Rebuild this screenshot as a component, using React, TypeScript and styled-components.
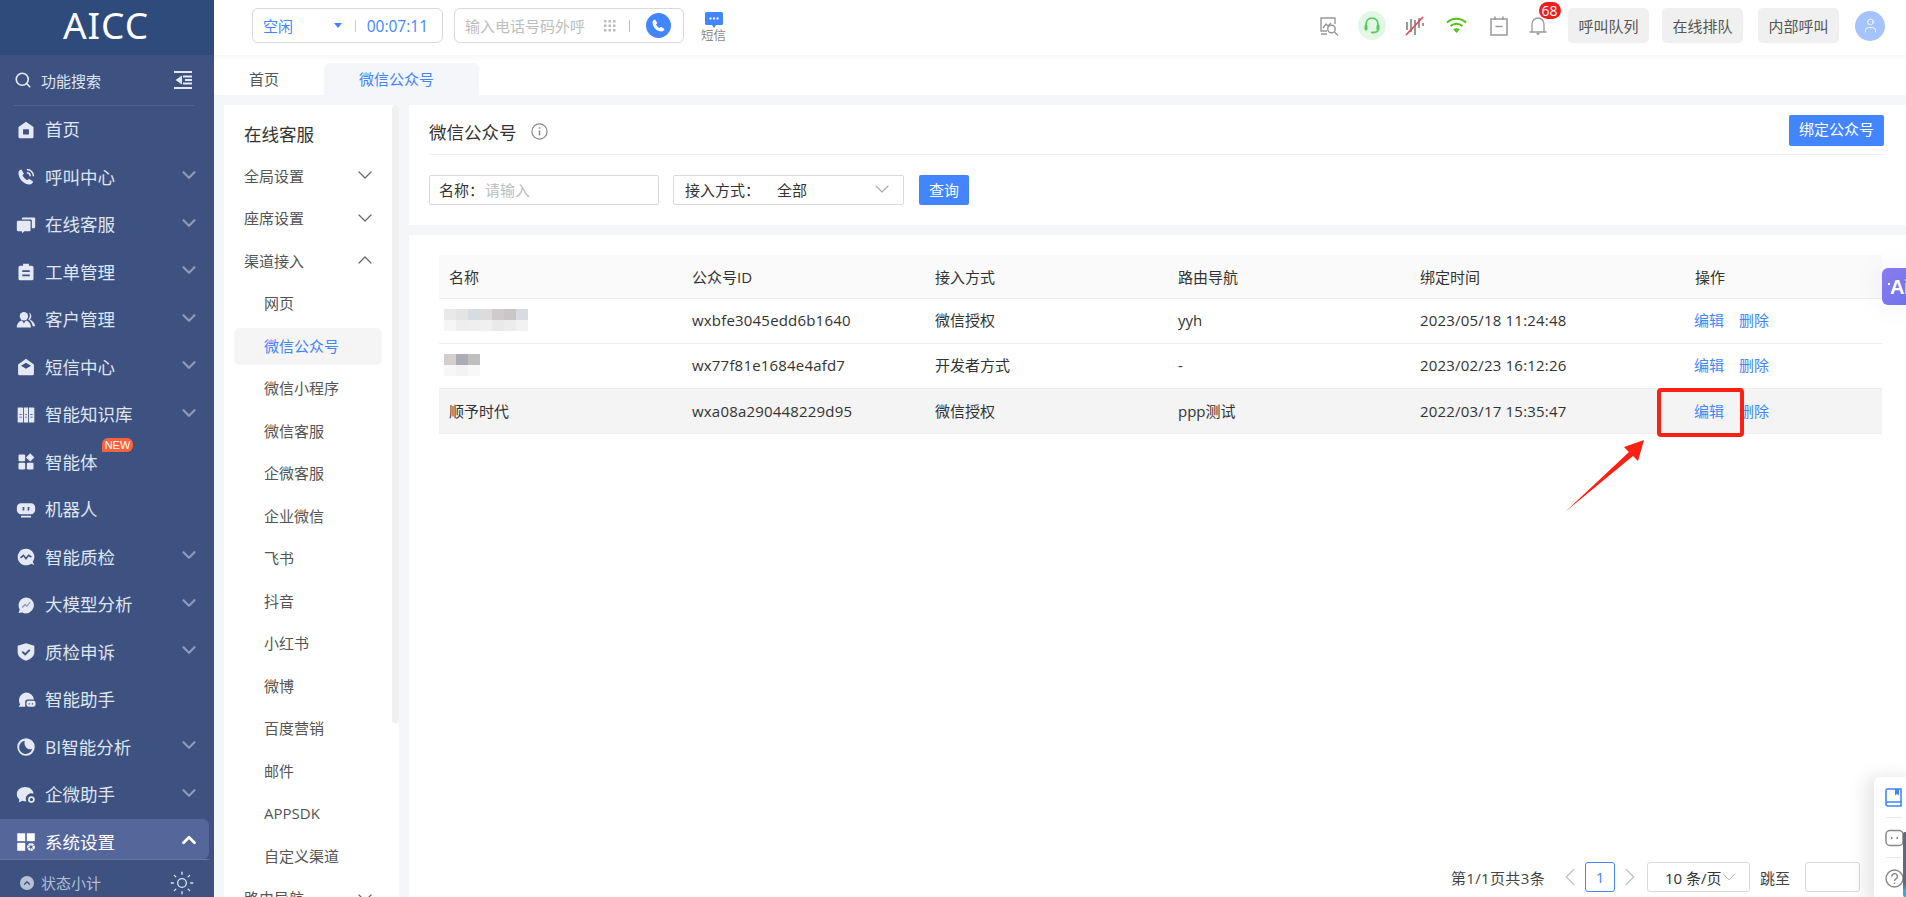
import * as React from 'react';
import styled, { createGlobalStyle } from 'styled-components';
import { Search, ChevronDown, ChevronUp, ChevronLeft, ChevronRight, Sun, User } from 'lucide-react';

const FONT = `"Open Sans", "Noto Sans CJK SC", sans-serif`;
const BLUE = '#4285ff';

const GlobalStyle = createGlobalStyle`
  html, body { margin: 0; padding: 0; height: 100%; overflow: hidden; background: #f4f6fa; }
  * { box-sizing: border-box; }
  body { font-family: ${FONT}; color: #333; }
`;

const Page = styled.div`
  position: relative;
  display: flex;
  width: 1906px;
  height: 897px;
  overflow: hidden;
`;

/* left nav */
const Sidebar = styled.aside`
  display: flex;
  flex-direction: column;
  flex: 0 0 214px;
  height: 897px;
  background: #3e5282;
  color: #dfe5f1;
`;

const Logo = styled.div`
  height: 55px;
  flex: none;
  padding-right: 2px;
  background: #2f4b7c;
  color: #fff;
  font: 400 37px/50px "Noto Sans", sans-serif;
  letter-spacing: 1px;
  text-align: center;
`;

const SearchRow = styled.div`
  display: flex;
  align-items: center;
  flex: none;
  height: 51px;
  margin: 0 20px 0 14px;
  padding-right: 2px;
  border-bottom: 1px solid #4f6392;
  font-size: 15px;
  gap: 9px;
  span { flex: 1; }
`;

const Nav = styled.nav`
  flex: 1;
  min-height: 0;
  overflow: hidden;
`;

const NavItem = styled.div<{ $active?: boolean }>`
  display: flex;
  align-items: center;
  height: ${(p) => (p.$active ? '40.5px' : '47.5px')};
  width: 209px;
  padding: ${(p) => (p.$active ? '7px 9px 0 16px' : '0 9px 0 16px')};
  font-size: 17.5px;
  border-radius: 0 6px 6px 0;
  background: ${(p) => (p.$active ? '#55669a' : 'transparent')};
  color: ${(p) => (p.$active ? '#fff' : '#dfe5f1')};
  white-space: nowrap;
`;

const NavIcon = styled.svg`
  flex: none;
  width: 20px;
  height: 20px;
  margin-right: 9px;
  fill: #e4e9f3;
`;

const NavLabel = styled.span`
  position: relative;
  flex: 1;
  padding-bottom: 2px;
`;

const NewTag = styled.b`
  position: absolute;
  left: 57px;
  top: -11px;
  width: 31px;
  height: 14px;
  font: 400 11px/14px "Liberation Sans", sans-serif;
  text-align: center;
  color: #fff;
  background: #f9623c;
  border-radius: 6px 6px 6px 0;
`;

const Caret = styled.span<{ $bright?: boolean }>`
  display: flex;
  color: ${(p) => (p.$bright ? '#fff' : '#8d99b9')};
  svg { display: block; margin-top: -4px; }
`;

const SideFoot = styled.div`
  display: flex;
  align-items: center;
  flex: none;
  height: 38px;
  width: 209px;
  padding: 8px 14px 0 20px;
  border-top: 1px solid #65769f;
  font-size: 15px;
  color: #b3bdd3;
  gap: 7px;
  span { flex: 1; }
`;

const FootDot = styled.i`
  display: flex;
  align-items: center;
  justify-content: center;
  width: 14px;
  height: 14px;
  border-radius: 50%;
  color: #3e5282;
  background: #b8c1d6;
`;

/* right column */
const Main = styled.div`
  display: flex;
  flex-direction: column;
  flex: 1;
  min-width: 0;
`;

const TopBar = styled.header`
  display: flex;
  align-items: center;
  flex: none;
  height: 55px;
  padding: 0 21px 4px 38px;
  background: #fff;
`;

const CallBox = styled.div<{ $w: number }>`
  display: flex;
  align-items: center;
  width: ${(p) => p.$w}px;
  height: 35px;
  padding: 0 10px;
  margin-right: 11px;
  border: 1px solid #d9d9d9;
  border-radius: 6px;
  font-size: 15px;
`;

const StateText = styled.span`
  flex: 1;
  color: ${BLUE};
`;

const DownTri = styled.i`
  width: 0;
  height: 0;
  margin-right: 13px;
  border: 4px solid transparent;
  border-top: 5px solid ${BLUE};
  border-bottom: 0;
`;

const VLine = styled.i`
  width: 1px;
  height: 12px;
  background: #c5cfe0;
`;

const Timer = styled.span`
  margin: 0 4px 0 11px;
  color: ${BLUE};
  font-size: 15.5px;
`;

const Placeholder = styled.span`
  flex: 1;
  color: #bdbdbd;
`;

const DialGrid = styled.svg`
  margin-right: -2px;
`;

const DialLine = styled(VLine)`
  margin-left: 15px;
  background: #bbb;
`;

const CallRound = styled.span`
  display: flex;
  align-items: center;
  justify-content: center;
  width: 25px;
  height: 25px;
  margin-left: 16px;
  margin-right: 2px;
  border-radius: 50%;
  background: ${BLUE};
`;

const SmsLink = styled.div`
  display: flex;
  flex-direction: column;
  align-items: center;
  margin-left: 6px;
  padding-top: 3px;
  font-size: 12.5px;
  line-height: 15px;
  color: #8a8a8a;
`;

const TopRight = styled.div`
  display: flex;
  align-items: center;
  margin-left: auto;
`;

const Slot = styled.span`
  position: relative;
  display: flex;
  align-items: center;
  justify-content: center;
  width: 42.5px;
`;

const BellSlot = styled(Slot)`
  width: 38.5px;
  padding-right: 4px;
`;

const HeadsetBg = styled.span`
  display: flex;
  align-items: center;
  justify-content: center;
  width: 28px;
  height: 29px;
  border-radius: 50%;
  background: #e4f6e6;
`;

const Badge = styled.b`
  position: absolute;
  left: 18px;
  top: -14px;
  width: 22px;
  height: 17px;
  font: 400 14px/17px ${FONT};
  text-align: center;
  color: #fff;
  background: #ee1d1d;
  border-radius: 9px;
`;

const GreyBtn = styled.span<{ $gap?: number }>`
  display: flex;
  align-items: center;
  justify-content: center;
  width: 81px;
  height: 35px;
  margin-left: ${(p) => p.$gap ?? 13}px;
  font-size: 15px;
  color: #555;
  background: #f0f0f0;
  border-radius: 5px;
`;

const Avatar = styled.span`
  display: flex;
  align-items: center;
  justify-content: center;
  width: 30px;
  height: 30px;
  margin-left: 16px;
  border-radius: 50%;
  color: #fff;
  background: #a4c3ff;
`;

const TabBar = styled.div`
  display: flex;
  align-items: flex-end;
  flex: none;
  height: 40px;
  background: linear-gradient(#f8f8f8, #fff 6px);
`;

const Tab = styled.div<{ $active?: boolean }>`
  display: flex;
  align-items: center;
  justify-content: center;
  width: ${(p) => (p.$active ? '155px' : '110px')};
  height: 32px;
  padding: 0 10px 2px 0;
  font-size: 15px;
  color: ${(p) => (p.$active ? BLUE : '#555')};
  background: ${(p) => (p.$active ? '#f4f6fa' : 'transparent')};
  border-radius: 6px 6px 0 0;
`;

const Body = styled.div`
  display: flex;
  flex: 1;
  min-height: 0;
  padding: 10px 0 0 10px;
  gap: 10px;
`;

/* second level menu */
const SubSide = styled.div`
  position: relative;
  flex: 0 0 175px;
  background: #fff;
  overflow: hidden;
`;

const SubThumb = styled.i`
  position: absolute;
  right: 0;
  top: 0;
  width: 7px;
  height: 618px;
  background: #f0f0f0;
  border-radius: 4px;
`;

const SubTitle = styled.div`
  height: 50px;
  padding: 10px 0 0 20px;
  font-size: 17.5px;
  line-height: 38px;
  color: #333;
`;

const SubGroup = styled.div`
  display: flex;
  align-items: center;
  justify-content: space-between;
  width: 153px;
  height: 42.5px;
  padding: 0 0 2px 20px;
  font-size: 15px;
  color: #555;
  svg { color: #666; flex: none; }
`;

const SubRow = styled.div`
  display: flex;
  align-items: center;
  height: 42.5px;
  padding-left: 10px;
`;

const SubLeaf = styled.div<{ $active?: boolean }>`
  display: flex;
  align-items: center;
  width: 148px;
  height: 37px;
  padding: 0 0 2px 30px;
  font-size: 15px;
  color: ${(p) => (p.$active ? BLUE : '#555')};
  background: ${(p) => (p.$active ? '#f5f5f5' : 'transparent')};
  border-radius: 6px;
`;

/* content */
const Panel = styled.div`
  display: flex;
  flex-direction: column;
  flex: 1;
  min-width: 0;
  gap: 10px;
`;

const HeadCard = styled.section`
  flex: none;
  height: 120px;
  padding: 0 22px 0 20px;
  background: #fff;
`;

const TitleRow = styled.div`
  display: flex;
  align-items: center;
  height: 50px;
  padding-top: 3px;
  border-bottom: 1px solid #eee;
  font-size: 17.5px;
  color: #333;
  gap: 14px;
`;

const BindBtn = styled.span`
  margin: 0 0 1px auto;
  height: 31px;
  padding: 0 10px;
  font-size: 15px;
  line-height: 29px;
  color: #fff;
  background: ${BLUE};
  border-radius: 2px;
`;

const FilterRow = styled.div`
  display: flex;
  align-items: center;
  margin-top: 20px;
  font-size: 15px;
`;

const Field = styled.div<{ $w: number; $pad: number }>`
  display: flex;
  align-items: center;
  width: ${(p) => p.$w}px;
  height: 30px;
  margin-right: 14px;
  padding: 0 8px 2px ${(p) => p.$pad}px;
  border: 1px solid #d9d9d9;
  border-radius: 2px;
  color: #333;
`;

const FieldHint = styled.span`
  margin-left: 1px;
  color: #bdbdbd;
`;

const FieldValue = styled.span`
  flex: 1;
  margin-left: 17px;
`;

const FieldArrow = styled(ChevronDown)`
  flex: none;
  margin-right: 1px;
  color: #aaa;
`;

const QueryBtn = styled.span`
  width: 50px;
  height: 30px;
  margin-left: 1px;
  line-height: 30px;
  text-align: center;
  color: #fff;
  background: ${BLUE};
  border-radius: 2px;
`;

const TableCard = styled.section`
  position: relative;
  display: flex;
  flex-direction: column;
  flex: 1;
  min-height: 0;
  padding: 20px 24px 5px 30px;
  background: #fff;
`;

const Table = styled.table`
  width: 1443px;
  table-layout: fixed;
  border-collapse: collapse;
  font-size: 15px;
`;

const Th = styled.th<{ $w: number }>`
  width: ${(p) => p.$w}px;
  height: 43px;
  padding: 0 10px;
  font-weight: 400;
  text-align: left;
  color: #333;
  background: #fafafa;
  border-bottom: 1px solid #eee;
`;

const Td = styled.td`
  height: 45px;
  padding: 0 10px;
  color: #333;
  border-bottom: 1px solid #eee;
`;

const Tr = styled.tr<{ $hover?: boolean }>`
  background: ${(p) => (p.$hover ? '#f4f4f4' : '#fff')};
  ${Td} { padding-bottom: ${(p) => (p.$hover ? 0 : 2)}px; }
`;

const CodeTd = styled(Td)`
  letter-spacing: 0.19px;
`;

const ActionTd = styled(Td)`
  padding-left: 9px;
`;

const Mosaic = styled.svg`
  display: block;
  margin-left: -5px;
`;

const Action = styled.a`
  margin-right: 15px;
  color: ${BLUE};
`;

const Pager = styled.div`
  display: flex;
  align-items: center;
  justify-content: flex-end;
  margin-top: auto;
  margin-right: 22px;
  height: 30px;
  font-size: 15px;
  color: #444;
`;

const PagerTotal = styled.span`
  margin-right: 17px;
  letter-spacing: 0.35px;
`;

const PagerArrow = styled.span`
  display: flex;
  width: 16px;
  justify-content: center;
  color: #c0c0c0;
  svg { flex: none; }
`;

const PagerNum = styled.span`
  width: 30px;
  height: 30px;
  margin: 0 7px;
  line-height: 28px;
  text-align: center;
  color: ${BLUE};
  border: 1px solid ${BLUE};
  border-radius: 3px;
`;

const PagerSelect = styled.span`
  display: flex;
  align-items: center;
  width: 103px;
  height: 30px;
  margin: 0 10px 0 9px;
  padding-left: 17px;
  color: #333;
  border: 1px solid #d9d9d9;
  border-radius: 3px;
  white-space: nowrap;
  svg { flex: none; color: #bbb; margin-left: -5px; }
`;

const PagerInput = styled.span`
  width: 55px;
  height: 30px;
  margin-left: 15px;
  border: 1px solid #d9d9d9;
  border-radius: 3px;
`;

/* things floating over the page */
const AiBtn = styled.div`
  position: absolute;
  left: 1882px;
  top: 268px;
  width: 30px;
  height: 37px;
  padding-left: 8px;
  font: 700 20px/38px "Liberation Sans", sans-serif;
  letter-spacing: -0.5px;
  color: #fff;
  background: linear-gradient(135deg, #8a7cf0, #6c73ea);
  border-radius: 6px;
  box-shadow: 0 0 24px rgba(120, 110, 240, 0.12);
  &::before {
    content: '';
    position: absolute;
    left: 6px;
    top: 15px;
    width: 2px;
    height: 2px;
    background: #fff;
  }
`;

const Helper = styled.div`
  position: absolute;
  left: 1874px;
  top: 777px;
  width: 50px;
  height: 130px;
  padding: 11px 0 0 11px;
  background: #fff;
  border-radius: 6px;
  box-shadow: -8px 0 18px rgba(0, 0, 0, 0.1);
  svg { display: block; }
`;

const HelperLine = styled.i`
  display: block;
  width: 16px;
  height: 1px;
  margin: 10px 0 11px 1px;
  background: #e8e8e8;
`;

const HelperStrip = styled.i`
  position: absolute;
  left: 1903px;
  top: 832px;
  width: 3px;
  height: 65px;
  background: linear-gradient(#5f6b78 80%, #3ea5d8 90%);
  border-radius: 2px 0 0 2px;
`;

const RedFrame = styled.div`
  position: absolute;
  left: 1657px;
  top: 388px;
  width: 87px;
  height: 49px;
  border: 4px solid #fb2014;
  border-radius: 4px;
`;

const ArrowMark = styled.svg`
  position: absolute;
  left: 1560px;
  top: 435px;
`;

const navItems: { label: string; icon: React.ReactNode; caret?: boolean }[] = [
  {
    label: '首页',
    icon: <path fillRule="evenodd" d="M12 2 21 8.500V20a2 2 0 0 1-2 2H5a2 2 0 0 1-2-2V8.500ZM8.500 11v6.500h7V11Z" />,
  },
  {
    label: '呼叫中心',
    caret: true,
    icon: (
      <>
        <path d="M6.500 3 9.500 8 7.800 10c1 2.500 3 4.600 5.700 6l2-1.800 5 3.200c-.4 2-2 3.600-4 3.600C9 21 2.800 13.500 3 6.800 3 5 4.500 3.300 6.500 3Z" />
        <path d="M13 3a8 8 0 0 1 8 8M13 7a4 4 0 0 1 4 4" fill="none" stroke="#e4e9f3" strokeWidth="1.800" />
      </>
    ),
  },
  {
    label: '在线客服',
    caret: true,
    icon: (
      <>
        <path d="M1 8.500A1.500 1.500 0 0 1 2.500 7H16a1.500 1.500 0 0 1 1.500 1.500V18a1.500 1.500 0 0 1-1.500 1.500H10L7.500 22 7 19.500H2.500A1.500 1.500 0 0 1 1 18Z" />
        <path d="M7 4.500A1.500 1.500 0 0 1 8.500 3H22a1 1 0 0 1 1 1v10.500a1.500 1.500 0 0 1-1.500 1.500H19V7a1.500 1.500 0 0 0-1.500-1.500H7Z" />
      </>
    ),
  },
  {
    label: '工单管理',
    caret: true,
    icon: (
      <path
        fillRule="evenodd"
        d="M8.500 2h7v2.500H19a2 2 0 0 1 2 2V20a2 2 0 0 1-2 2H5a2 2 0 0 1-2-2V6.500a2 2 0 0 1 2-2h3.500ZM7.500 10v2h9v-2Zm0 5v2h9v-2Z"
      />
    ),
  },
  {
    label: '客户管理',
    caret: true,
    icon: (
      <>
        <circle cx="9.500" cy="7.500" r="5" />
        <path d="M1 21c0-5 3-8 6-8.500l2.500 3.500 2.500-3.500c3 .5 6 3.500 6 8.500Z" />
        <path d="M15.500 3a5 5 0 0 1 1 8.500c3 1 6 4 6.500 8h-3c-.4-3.500-2.500-7-5.300-8.500a6.500 6.500 0 0 0 .8-8Z" />
      </>
    ),
  },
  {
    label: '短信中心',
    caret: true,
    icon: (
      <path
        fillRule="evenodd"
        d="M12 2 21.500 9V20a2 2 0 0 1-2 2h-15a2 2 0 0 1-2-2V9ZM6 10.500 12 14l6-3.500L12 7Z"
      />
    ),
  },
  {
    label: '智能知识库',
    caret: true,
    icon: (
      <path
        fillRule="evenodd"
        d="M3 3h4.500a1 1 0 0 1 1 1v17h-5.500a1 1 0 0 1-1-1V4a1 1 0 0 1 1-1Zm6.500 0h5v18h-5Zm6 0H21a1 1 0 0 1 1 1v16a1 1 0 0 1-1 1h-5.500ZM4 11v1h3v-1Zm0 3v1h3v-1Zm7-3v1h2v-1Zm0 3v1h2v-1Zm6-3v1h3v-1Zm0 3v1h3v-1Z"
      />
    ),
  },
  {
    label: '智能体',
    icon: (
      <>
        <rect x="3" y="3" width="8" height="8" rx="1.500" />
        <rect x="3" y="13" width="8" height="8" rx="1.500" />
        <rect x="13" y="13" width="8" height="8" rx="1.500" />
        <path d="M17 1.500 22 6.500 17 11.500 12 6.500Z" />
      </>
    ),
  },
  {
    label: '机器人',
    icon: (
      <path
        fillRule="evenodd"
        d="M6 4h12a5 5 0 0 1 5 5v3a5 5 0 0 1-5 5H6a5 5 0 0 1-5-5V9a5 5 0 0 1 5-5Zm2 4.500v4h2v-4Zm6 0v4h2v-4ZM6 19h12v2H6Z"
      />
    ),
  },
  {
    label: '智能质检',
    caret: true,
    icon: (
      <>
        <path d="M12 2a10 10 0 0 1 8 16l2 3.500-4-1.500A10 10 0 1 1 12 2Z" />
        <path d="M5.500 13 9 10l3 4 3-4 3.500 2" fill="none" stroke="#3e5282" strokeWidth="1.800" />
      </>
    ),
  },
  {
    label: '大模型分析',
    caret: true,
    icon: (
      <>
        <path d="M12 3a9.500 9.500 0 1 1-4.500 17.900L3 21.500l1.500-4A9.500 9.500 0 0 1 12 3Z" />
        <path d="M7.500 15 11 11.500l2 2 4-5" fill="none" stroke="#7f8fb3" strokeWidth="1.300" />
      </>
    ),
  },
  {
    label: '质检申诉',
    caret: true,
    icon: (
      <>
        <path d="M12 1.500 22 4.500V12c0 5-4 8.500-10 10.500C6 20.500 2 17 2 12V4.500Z" />
        <path d="M7.500 11.500 11 15l5.500-5.500" fill="none" stroke="#3e5282" strokeWidth="2.300" />
      </>
    ),
  },
  {
    label: '智能助手',
    icon: (
      <>
        <path d="M12 3a9.500 9.500 0 0 1 9.500 8.500H14a3 3 0 0 0-3 3V20H3l2-2.500A9.500 9.500 0 0 1 12 3Z" />
        <path fillRule="evenodd" d="M15 13h6a2.500 2.500 0 0 1 2.500 2.500v2A2.500 2.500 0 0 1 21 20h-6a2.500 2.500 0 0 1-2.500-2.500v-2A2.500 2.500 0 0 1 15 13Zm0 3v1.500h1.500V16Zm4 0v1.500h1.500V16Z" />
      </>
    ),
  },
  {
    label: 'BI智能分析',
    caret: true,
    icon: (
      <path
        fillRule="evenodd"
        d="M12 1.500a10.500 10.500 0 1 1 0 21 10.500 10.500 0 0 1 0-21ZM10.500 4.500a8 8 0 1 0 9 10C13.500 16 9 11 10.500 4.500Z"
      />
    ),
  },
  {
    label: '企微助手',
    caret: true,
    icon: (
      <>
        <path d="M11 2.500c5.500 0 9.800 3.500 10 8a6.500 6.500 0 0 0-8.500 8.800C11 19.700 9 19.500 7.500 19L3.500 21l.5-4C2 15.500 1 13.500 1 11c0-4.800 4.500-8.500 10-8.500Z" />
        <circle cx="18.500" cy="17.500" r="3" fill="none" stroke="#e4e9f3" strokeWidth="2" />
      </>
    ),
  },
  {
    label: '系统设置',
    caret: true,
    icon: (
      <>
        <rect x="1.500" y="1.500" width="9.500" height="9.500" fill="#fff" />
        <rect x="13" y="1.500" width="9.500" height="9.500" fill="#fff" />
        <rect x="1.500" y="13" width="9.500" height="9.500" fill="#fff" />
        <circle cx="18" cy="18" r="3.300" fill="none" stroke="#fff" strokeWidth="2.800" strokeDasharray="2.500 .6" />
      </>
    ),
  },
];

const channelLeaves = [
  '网页',
  '微信公众号',
  '微信小程序',
  '微信客服',
  '企微客服',
  '企业微信',
  '飞书',
  '抖音',
  '小红书',
  '微博',
  '百度营销',
  '邮件',
  'APPSDK',
  '自定义渠道',
];

const columns = [
  { label: '名称', w: 243 },
  { label: '公众号ID', w: 243 },
  { label: '接入方式', w: 243 },
  { label: '路由导航', w: 242 },
  { label: '绑定时间', w: 275 },
  { label: '操作', w: 197 },
];

const mosaicOne = [
  ['#e9e9e9', '#e4e4e4', '#d8dbe0', '#dcdcdc', '#cfcbcb', '#c8c6c6', '#d8dce0'],
  ['#f6f6f6', '#eeeeee', '#efefef', '#f0f0f0', '#e9e9e9', '#ececec', '#f2f2f2'],
];
const mosaicTwo = [
  ['#d4cfcc', '#acacb4', '#bfbfbf'],
  ['#f7f7f7', '#f3f3f3', '#f8f8f8'],
];

function Blur({ cells }: { cells: string[][] }) {
  return (
    <Mosaic width={cells[0].length * 12} height={22}>
      {cells.map((row, y) => row.map((c, x) => <rect key={`${x}-${y}`} x={x * 12} y={y * 11} width="12" height="11" fill={c} />))}
    </Mosaic>
  );
}

const rows: { name: React.ReactNode; id: string; way: string; route: string; time: string; hover?: boolean }[] = [
  { name: <Blur cells={mosaicOne} />, id: 'wxbfe3045edd6b1640', way: '微信授权', route: 'yyh', time: '2023/05/18 11:24:48' },
  { name: <Blur cells={mosaicTwo} />, id: 'wx77f81e1684e4afd7', way: '开发者方式', route: '-', time: '2023/02/23 16:12:26' },
  { name: '顺予时代', id: 'wxa08a290448229d95', way: '微信授权', route: 'ppp测试', time: '2022/03/17 15:35:47', hover: true },
];

export default function App() {
  return (
    <Page>
      <GlobalStyle />
      <Sidebar>
        <Logo>AICC</Logo>
        <SearchRow>
          <Search size={18} strokeWidth={2.2} color="#e4e9f3" />
          <span>功能搜索</span>
          <svg width="18" height="18" viewBox="0 0 18 18" fill="#e4e9f3">
            <path d="M0 0h18v2H0ZM0 16h18v2H0ZM9 4.500h9v2H9ZM9 11.500h9v2H9ZM11 8h7v2h-7ZM8 4.500v9L1.500 9Z" />
          </svg>
        </SearchRow>
        <Nav>
          {navItems.map((item, i) => {
            const active = i === navItems.length - 1;
            return (
              <NavItem key={item.label} $active={active}>
                <NavIcon viewBox="0 0 24 24">{item.icon}</NavIcon>
                <NavLabel>
                  {item.label}
                  {item.label === '智能体' && <NewTag>NEW</NewTag>}
                </NavLabel>
                {item.caret && (
                  <Caret $bright={active}>
                    {active ? <ChevronUp size={22} strokeWidth={3} /> : <ChevronDown size={22} strokeWidth={2.5} />}
                  </Caret>
                )}
              </NavItem>
            );
          })}
        </Nav>
        <SideFoot>
          <FootDot>
            <ChevronUp size={10} strokeWidth={3} />
          </FootDot>
          <span>状态小计</span>
          <Sun size={26} strokeWidth={1.2} color="#dfe5f1" />
        </SideFoot>
      </Sidebar>

      <Main>
        <TopBar>
          <CallBox $w={191}>
            <StateText>空闲</StateText>
            <DownTri />
            <VLine />
            <Timer>00:07:11</Timer>
          </CallBox>
          <CallBox $w={230}>
            <Placeholder>输入电话号码外呼</Placeholder>
            <DialGrid width="12" height="12" viewBox="0 0 12 12" fill="#bbb">
              {[0, 4.5, 9].map((y) => [0, 4.5, 9].map((x) => <rect key={`${x}${y}`} x={x} y={y} width="2.500" height="2.500" />))}
            </DialGrid>
            <DialLine />
            <CallRound>
              <svg width="15" height="15" viewBox="0 0 24 24" fill="#fff">
                <path d="M6.500 2.500 10 8 8 10.500c1.200 2.500 3 4.300 5.500 5.500L16 14l5.500 3.500c-.5 2.500-2.500 4-4.500 4C9.500 21.500 2.500 14.500 2.500 7c0-2 1.500-4 4-4.500Z" />
              </svg>
            </CallRound>
          </CallBox>
          <SmsLink>
            <svg width="18" height="16" viewBox="0 0 18 16" fill={BLUE}>
              <path fillRule="evenodd" d="M1.500 0h15A1.500 1.500 0 0 1 18 1.500v10a1.500 1.500 0 0 1-1.500 1.500H11l-2 3-2-3H1.500A1.500 1.500 0 0 1 0 11.500v-10A1.500 1.500 0 0 1 1.500 0ZM4.500 5.500v2h2v-2Zm3.500 0v2h2v-2Zm3.500 0v2h2v-2Z" />
            </svg>
            短信
          </SmsLink>
          <TopRight>
            <Slot>
              <svg width="20" height="20" viewBox="0 0 20 20" fill="none" stroke="#999" strokeWidth="1.400">
                <path d="M8 15H2V2h14v6M4 12l3-4 2 2 3-3" />
                <circle cx="12.500" cy="13" r="3.800" />
                <path d="M15.500 16 19 19.500M2 18h6" />
              </svg>
            </Slot>
            <Slot>
              <HeadsetBg>
                <svg width="18" height="19" viewBox="0 0 18 19" fill="none" stroke="#4fce5d" strokeWidth="1.700">
                  <path d="M3 10V8a6 6 0 0 1 12 0v2M15 13c0 2-1.500 3.500-4.500 3.500" />
                  <rect x="1.500" y="8.500" width="3" height="6" rx="1.500" fill="#4fce5d" stroke="none" />
                  <rect x="13.500" y="8.500" width="3" height="6" rx="1.500" fill="#4fce5d" stroke="none" />
                  <rect x="8" y="15.500" width="3.500" height="2" rx="1" fill="#4fce5d" stroke="none" />
                </svg>
              </HeadsetBg>
            </Slot>
            <Slot>
              <svg width="19" height="20" viewBox="0 0 19 20" strokeWidth="2">
                <path d="M2 6v8M6 3v13M10 4v15M14 2v10M18 7v3" stroke="#999" fill="none" />
                <path d="M1 19 18 1" stroke="#f0474b" strokeWidth="1.700" fill="none" />
              </svg>
            </Slot>
            <Slot>
              <svg width="21" height="17" viewBox="0 0 21 17" fill="none" stroke="#52c41a" strokeWidth="2.200">
                <path d="M1 5.500c5.500-5 13.500-5 19 0M4.500 9c3.500-3 8.500-3 12 0" />
                <path d="M7.200 12.200 10.500 16l3.300-3.800c-2-1.300-4.600-1.300-6.600 0Z" fill="#52c41a" stroke="none" />
              </svg>
            </Slot>
            <Slot>
              <svg width="18" height="20" viewBox="0 0 18 20" fill="none" stroke="#999" strokeWidth="1.500">
                <path d="M1 3h16v16H1ZM5 .500V4M13 .500V4M5.500 10.500h7" />
              </svg>
            </Slot>
            <BellSlot>
              <svg width="18" height="20" viewBox="0 0 18 20" fill="none" stroke="#999" strokeWidth="1.300">
                <path d="M.500 16h17M3 16V8a6 6 0 0 1 12 0v8" />
                <path d="M7 17h4l-2 2.500Z" fill="#999" stroke="none" />
              </svg>
              <Badge>68</Badge>
            </BellSlot>
            <GreyBtn $gap={9}>呼叫队列</GreyBtn>
            <GreyBtn>在线排队</GreyBtn>
            <GreyBtn $gap={15}>内部呼叫</GreyBtn>
            <Avatar>
              <User size={17} strokeWidth={1.3} />
            </Avatar>
          </TopRight>
        </TopBar>

        <TabBar>
          <Tab>首页</Tab>
          <Tab $active>微信公众号</Tab>
        </TabBar>

        <Body>
          <SubSide>
            <SubThumb />
            <SubTitle>在线客服</SubTitle>
            <SubGroup>
              全局设置
              <ChevronDown size={24} strokeWidth={1.2} />
            </SubGroup>
            <SubGroup>
              座席设置
              <ChevronDown size={24} strokeWidth={1.2} />
            </SubGroup>
            <SubGroup>
              渠道接入
              <ChevronUp size={24} strokeWidth={1.2} />
            </SubGroup>
            {channelLeaves.map((leaf) => (
              <SubRow key={leaf}>
                <SubLeaf $active={leaf === '微信公众号'}>{leaf}</SubLeaf>
              </SubRow>
            ))}
            <SubGroup>
              路由导航
              <ChevronDown size={24} strokeWidth={1.2} />
            </SubGroup>
          </SubSide>

          <Panel>
            <HeadCard>
              <TitleRow>
                微信公众号
                <svg width="17" height="17" viewBox="0 0 17 17" fill="none" stroke="#888" strokeWidth="1.200">
                  <circle cx="8.500" cy="8.500" r="7.600" />
                  <path d="M8.500 7.500v5M8.500 4.200v1.500" strokeWidth="1.500" />
                </svg>
                <BindBtn>绑定公众号</BindBtn>
              </TitleRow>
              <FilterRow>
                <Field $w={230} $pad={9}>
                  名称：<FieldHint>请输入</FieldHint>
                </Field>
                <Field $w={231} $pad={11}>
                  接入方式：<FieldValue>全部</FieldValue>
                  <FieldArrow size={24} strokeWidth={1.1} />
                </Field>
                <QueryBtn>查询</QueryBtn>
              </FilterRow>
            </HeadCard>

            <TableCard>
              <Table>
                <thead>
                  <tr>
                    {columns.map((c) => (
                      <Th key={c.label} $w={c.w}>
                        {c.label}
                      </Th>
                    ))}
                  </tr>
                </thead>
                <tbody>
                  {rows.map((row) => (
                    <Tr key={row.id} $hover={row.hover}>
                      <Td>{row.name}</Td>
                      <CodeTd>{row.id}</CodeTd>
                      <Td>{row.way}</Td>
                      <Td>{row.route}</Td>
                      <CodeTd>{row.time}</CodeTd>
                      <ActionTd>
                        <Action>编辑</Action>
                        <Action>删除</Action>
                      </ActionTd>
                    </Tr>
                  ))}
                </tbody>
              </Table>
              <Pager>
                <PagerTotal>第1/1页共3条</PagerTotal>
                <PagerArrow>
                  <ChevronLeft size={30} strokeWidth={1} />
                </PagerArrow>
                <PagerNum>1</PagerNum>
                <PagerArrow>
                  <ChevronRight size={30} strokeWidth={1} />
                </PagerArrow>
                <PagerSelect>
                  10 条/页
                  <ChevronDown size={24} strokeWidth={1} />
                </PagerSelect>
                跳至
                <PagerInput />
              </Pager>
            </TableCard>
          </Panel>
        </Body>
      </Main>

      <RedFrame />
      <ArrowMark width="92" height="82" viewBox="0 0 92 82">
        <path d="M5 77 69 17 64 12 84 5 78 26 73 21Z" fill="#fb2014" />
      </ArrowMark>

      <AiBtn>Ai</AiBtn>
      <Helper>
        <svg width="17" height="19" viewBox="0 0 17 19" fill="none" stroke={BLUE} strokeWidth="1.600">
          <path d="M1 15V2.500A1.500 1.500 0 0 1 2.500 1H16v17H3a2 2 0 0 1-2-2 2 2 0 0 1 2-2h13" />
          <path d="M10 1h4v6.500L12 6l-2 1.500Z" fill={BLUE} stroke="none" />
        </svg>
        <HelperLine />
        <svg width="19" height="18" viewBox="0 0 19 18" fill="none" stroke="#888" strokeWidth="1.500">
          <rect x="1" y="1.500" width="17" height="15" rx="4" />
          <path d="M6 9h1.500M11.500 9H13" strokeWidth="2" />
        </svg>
        <HelperLine />
        <svg width="19" height="19" viewBox="0 0 19 19" fill="none" stroke="#888" strokeWidth="1.400">
          <circle cx="9.500" cy="9.500" r="8.500" />
          <path d="M6.800 7.500a2.800 2.800 0 1 1 4.200 2.400c-1 .6-1.500 1-1.500 2.100M9.500 13.500v1.500" />
        </svg>
      </Helper>
      <HelperStrip />
    </Page>
  );
}
